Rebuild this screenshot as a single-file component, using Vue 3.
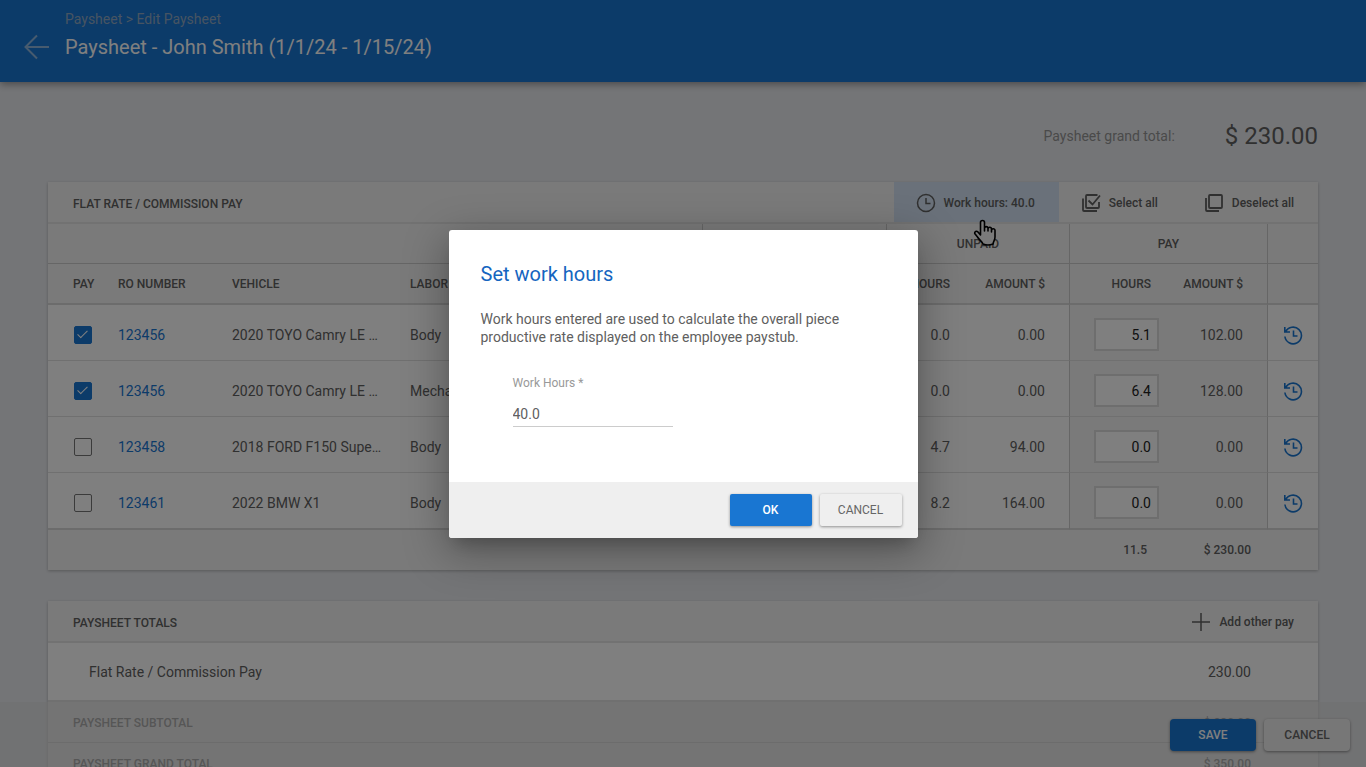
<script setup>
import { ref } from 'vue'

const workHours = ref('40.0')
const rows = ref([
  { id: 1, pay: true, ro: '123456', vehicle: '2020 TOYO Camry LE …', labor: 'Body', hours: '0.0', amount: '0.00', payHours: '5.1', payAmount: '102.00' },
  { id: 2, pay: true, ro: '123456', vehicle: '2020 TOYO Camry LE …', labor: 'Mechanical', hours: '0.0', amount: '0.00', payHours: '6.4', payAmount: '128.00' },
  { id: 3, pay: false, ro: '123458', vehicle: '2018 FORD F150 Supe…', labor: 'Body', hours: '4.7', amount: '94.00', payHours: '0.0', payAmount: '0.00' },
  { id: 4, pay: false, ro: '123461', vehicle: '2022 BMW X1', labor: 'Body', hours: '8.2', amount: '164.00', payHours: '0.0', payAmount: '0.00' },
])
</script>

<template>
  <div class="page">
    <header class="topbar">
      <a href="#" class="back" aria-label="Back">
        <svg width="26" height="26" viewBox="0 0 26 26"><path d="M25 13H2M13 1.500L1.500 13L13 24.500" /></svg>
      </a>
      <div>
        <nav class="crumbs">Paysheet &gt; Edit Paysheet</nav>
        <h1>Paysheet - John Smith (1/1/24 - 1/15/24)</h1>
      </div>
    </header>

    <main class="content">
      <div class="grand">
        <span class="grand-label">Paysheet grand total:</span>
        <span class="grand-value">$ 230.00</span>
      </div>

      <section class="card">
        <div class="card-head">
          <h2>FLAT RATE / COMMISSION PAY</h2>
          <div class="tools">
            <button type="button" class="tool active">
              <svg class="icon" width="20" height="20" viewBox="0 0 20 20"><circle cx="10" cy="10" r="8.500" /><path d="M10 5V10.500H14.500" /></svg>
              Work hours: 40.0
              <svg class="hand" width="24" height="28" viewBox="0 0 24 28">
                <path d="M7.500 16V3.500A2 2 0 0 1 11.500 3.500V12V9A1.800 1.800 0 0 1 15 9V12V10A1.700 1.700 0 0 1 18.500 10V13V11.500A1.700 1.700 0 0 1 22 11.500V18C22 21 20.500 22 20 25Q15 27 10 25C9 22.500 6 20.500 4.500 18L1.700 14.500C1.200 12.500 3.500 11.500 5 13Z" />
              </svg>
            </button>
            <button type="button" class="tool">
              <svg class="icon thick" width="20" height="20" viewBox="0 0 20 20"><path d="M16.500 2H6Q5 2 5 3V14Q5 15 6 15H17Q18 15 18 14V9M2 5.500V17Q2 18 3 18H16M7.500 7.500L11.500 11.500L19 2.500" /></svg>
              Select all
            </button>
            <button type="button" class="tool">
              <svg class="icon thick" width="20" height="20" viewBox="0 0 20 20"><rect x="5" y="2" width="13" height="13" rx="1" /><path d="M2 5V17Q2 18 3 18H15" /></svg>
              Deselect all
            </button>
          </div>
        </div>

        <table>
          <colgroup>
            <col class="c-pay"><col class="c-ro"><col class="c-vehicle"><col><col class="c-paid"><col class="c-hours"><col class="c-amount"><col class="c-payhours"><col class="c-payamount"><col class="c-history">
          </colgroup>
          <thead>
            <tr class="groups">
              <th colspan="4"></th>
              <th class="line"></th>
              <th class="line" colspan="2">UNPAID</th>
              <th class="line" colspan="2">PAY</th>
              <th class="line"></th>
            </tr>
            <tr class="heads">
              <th class="first">PAY</th>
              <th>RO NUMBER</th>
              <th>VEHICLE</th>
              <th>LABOR TYPE</th>
              <th class="line"></th>
              <th class="line num hours">HOURS</th>
              <th class="num amount">AMOUNT $</th>
              <th class="line num amount">HOURS</th>
              <th class="num amount">AMOUNT $</th>
              <th class="line"></th>
            </tr>
          </thead>
          <tbody>
            <tr v-for="row in rows" :key="row.id">
              <td class="first"><input v-model="row.pay" type="checkbox" :aria-label="'Pay ' + row.ro"></td>
              <td><a href="#">{{ row.ro }}</a></td>
              <td>{{ row.vehicle }}</td>
              <td>{{ row.labor }}</td>
              <td class="line"></td>
              <td class="line num hours">{{ row.hours }}</td>
              <td class="num amount">{{ row.amount }}</td>
              <td class="line tint num hours"><input v-model="row.payHours" type="text" class="hours-box" :aria-label="'Hours to pay ' + row.ro"></td>
              <td class="tint num amount">{{ row.payAmount }}</td>
              <td class="line center">
                <button type="button" class="history" :aria-label="'History ' + row.ro">
                  <svg width="20" height="20" viewBox="0 0 20 20"><path d="M2.700 6.800A8.300 8.300 0 1 1 1.900 11.500M1.800 2V7H7M2 6.800L4.200 4.600M10.500 5.500V11H14.500" /></svg>
                </button>
              </td>
            </tr>
          </tbody>
          <tfoot>
            <tr>
              <td colspan="7"></td>
              <td class="num sum-hours">11.5</td>
              <td class="num sum-amount">$ 230.00</td>
              <td></td>
            </tr>
          </tfoot>
        </table>
      </section>

      <section class="card totals">
        <div class="card-head">
          <h2>PAYSHEET TOTALS</h2>
          <button type="button" class="tool">
            <svg class="icon" width="20" height="20" viewBox="0 0 20 20"><path d="M10 1V19M1 10H19" /></svg>
            Add other pay
          </button>
        </div>
        <div class="total-row main"><span>Flat Rate / Commission Pay</span><span>230.00</span></div>
        <div class="total-row sub"><span>PAYSHEET SUBTOTAL</span><span>$ 230.00</span></div>
        <div class="total-row sub"><span>PAYSHEET GRAND TOTAL</span><span>$ 350.00</span></div>
      </section>
    </main>

    <footer class="actions">
      <button type="button" class="btn primary">SAVE</button>
      <button type="button" class="btn">CANCEL</button>
    </footer>

    <div class="overlay">
      <form class="dialog" role="dialog" aria-modal="true" aria-labelledby="dialog-title" @submit.prevent>
        <div class="dialog-body">
          <h2 id="dialog-title">Set work hours</h2>
          <p>Work hours entered are used to calculate the overall piece productive rate displayed on the employee paystub.</p>
          <div class="field">
            <label for="work-hours">Work Hours *</label>
            <input id="work-hours" v-model="workHours" type="text">
          </div>
        </div>
        <div class="dialog-foot">
          <button type="submit" class="btn primary">OK</button>
          <button type="button" class="btn">CANCEL</button>
        </div>
      </form>
    </div>
  </div>
</template>

<style>
body { margin: 0; }
</style>

<style scoped>
.page {
  position: relative;
  height: 100vh;
  overflow: hidden;
  box-sizing: border-box;
  background: #e9ebef;
  color: #606060;
  font: 14px/18px Roboto, sans-serif;
}
.page *, .page *::before { box-sizing: border-box; }
h1, h2, p { margin: 0; font-weight: 400; }
button, input { font: inherit; color: inherit; margin: 0; }
a { color: #1976d2; text-decoration: none; }
svg { fill: none; stroke: currentColor; display: block; }

.topbar {
  position: relative;
  display: flex;
  height: 82px;
  padding: 10px 24px;
  gap: 15px;
  background: #1976d2;
  box-shadow: 0 2px 8px rgba(0, 0, 0, .4);
}
.back { color: #8fb6de; padding-top: 24px; }
.back svg { stroke-width: 2; }
.crumbs { color: #8fa9c4; }
h1 { color: #fff; font-size: 20px; line-height: 24px; padding-top: 7px; }

.content { padding: 0 48px; }
.grand {
  display: flex;
  justify-content: flex-end;
  align-items: center;
  gap: 50px;
  height: 100px;
  padding-top: 8px;
}
.grand-label { color: #959595; }
.grand-value { font-size: 24px; }

.card { background: #fff; box-shadow: 0 1px 3px rgba(0, 0, 0, .25); }
.totals { margin-top: 31px; }
.card-head {
  display: flex;
  justify-content: space-between;
  height: 42px;
  padding-left: 25px;
  background: #f5f5f5;
  border-bottom: 2px solid #e4e4e4;
}
.card-head h2 { font-size: 12px; font-weight: 500; line-height: 44px; }
.tools { display: flex; }
.tool {
  position: relative;
  display: flex;
  align-items: center;
  gap: 8px;
  padding: 2px 24px 0 22px;
  border: 0;
  background: none;
  font-size: 12px;
  font-weight: 500;
}
.tool.active { background: #d5e3f4; }
.icon { stroke-width: 1.5; }
.icon.thick { stroke-width: 1.8; }
.hand {
  position: absolute;
  left: 79px;
  top: 37px;
  z-index: 1;
  stroke: #000;
  stroke-width: 1.6;
  stroke-linejoin: round;
  fill: #f5f5f5;
}

table { width: 100%; table-layout: fixed; border-collapse: separate; border-spacing: 0; }
.c-pay { width: 70px; }
.c-ro { width: 114px; }
.c-vehicle { width: 178px; }
.c-paid { width: 184px; }
.c-hours { width: 80px; }
.c-amount { width: 103px; }
.c-payhours { width: 106px; }
.c-payamount { width: 92px; }
.c-history { width: 51px; }
th, td { padding: 0; text-align: left; }
th, tfoot td { background: #f5f5f5; font-size: 12px; font-weight: 500; }
.groups th { height: 40px; text-align: center; border-bottom: 1px solid #ccc; }
.heads th { height: 41px; border-bottom: 2px solid #d8d8d8; }
tbody td { height: 56px; border-bottom: 1px solid #e0e0e0; padding-top: 4px; }
tbody tr:last-child td { height: 57px; border-bottom: 2px solid #d8d8d8; }
tfoot td { height: 40px; }
.first { padding-left: 25px; }
.line { border-left: 1px solid #ccc; }
.tint { background: #f5f5f5; }
th.num, td.num { text-align: right; }
.hours { padding-right: 16px; }
.amount { padding-right: 24px; }
.sum-hours { padding-right: 28px; }
.sum-amount { padding-right: 16px; }
td.center { text-align: center; }
input[type="checkbox"] {
  appearance: none;
  display: block;
  width: 18px;
  height: 18px;
  margin-left: 1px;
  border: 1px solid #777;
  border-radius: 2px;
}
input[type="checkbox"]:checked { background: #1976d2; border-color: #1976d2; }
input[type="checkbox"]:checked::before {
  content: "";
  display: block;
  width: 5px;
  height: 10px;
  margin: 1px 0 0 5px;
  border: solid #fff;
  border-width: 0 1px 1px 0;
  transform: rotate(45deg);
}
.hours-box {
  width: 65px;
  height: 33px;
  padding: 0 6px;
  border: 2px solid #ddd;
  background: #fff;
  color: #222;
  text-align: right;
}
.history { display: inline-block; padding: 0; border: 0; background: none; color: #1976d2; vertical-align: middle; }
.history svg { stroke-width: 1.6; }

.total-row { display: flex; justify-content: space-between; align-items: center; padding: 0 67px 0 41px; }
.main { height: 59px; border-bottom: 2px solid #e0e0e0; }
.sub { height: 41px; padding-top: 2px; padding-left: 25px; background: #f5f5f5; border-bottom: 1px solid #ccc; font-size: 12px; font-weight: 500; }

.actions {
  position: absolute;
  inset: auto 0 0 0;
  display: flex;
  justify-content: flex-end;
  gap: 8px;
  height: 65px;
  padding: 17px 16px;
  background: rgba(224, 224, 224, .6);
}
.btn {
  height: 32px;
  width: 86px;
  padding: 0;
  border: 0;
  border-radius: 4px;
  background: #efefef;
  color: #666;
  font-size: 12px;
  font-weight: 500;
  box-shadow: 0 1px 3px rgba(0, 0, 0, .4);
}
.btn.primary { background: #1976d2; color: #fff; }

.overlay {
  position: absolute;
  inset: 0;
  z-index: 2;
  display: flex;
  align-items: center;
  justify-content: center;
  background: rgba(0, 0, 0, .5);
}
.dialog {
  width: 469px;
  border-radius: 3px;
  overflow: hidden;
  background: #fff;
  box-shadow: 0 11px 15px -7px rgba(0, 0, 0, .2), 0 12px 44px 3px rgba(0, 0, 0, .3);
}
.dialog-body { padding: 32px 32px 55px; }
.dialog h2 { color: #1565c0; font-size: 20px; line-height: 24px; }
.dialog p { margin-top: 24px; }
.field { display: flex; flex-direction: column; width: 160px; margin: 28px 0 0 32px; }
.field label { color: #999; font-size: 12px; }
.field input { height: 35px; padding: 10px 0 0; border: 0; border-bottom: 1px solid #ccc; background: none; outline: 0; }
.dialog-foot { display: flex; justify-content: flex-end; gap: 8px; padding: 12px 16px; background: #efefef; }
.dialog .btn { width: 82px; border-radius: 2px; }
.dialog .btn:not(.primary) { font-weight: 400; }
</style>
